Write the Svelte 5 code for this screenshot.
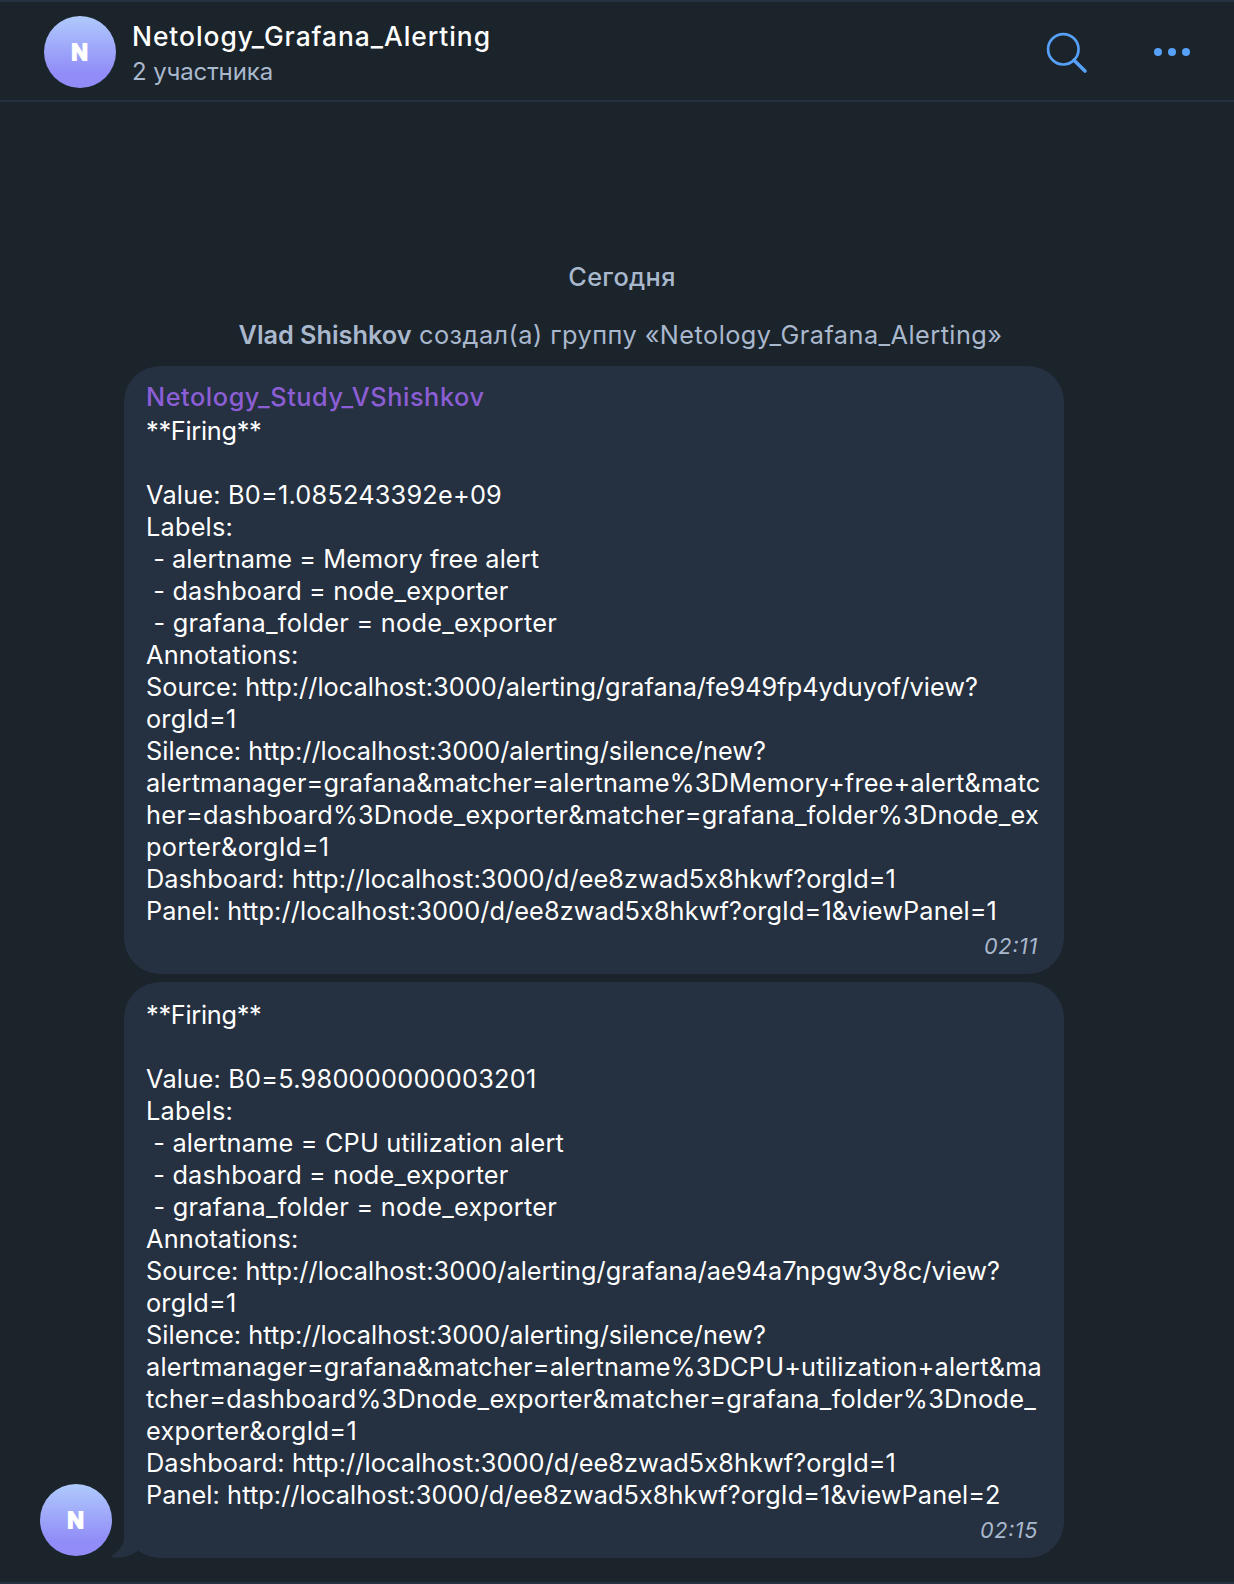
<script>
  const messages = [
    {
      author: { text: 'Netology_Study_VShishkov', width: 338.5 },
      time: { text: '02:11', width: 54 },
      lines: [
        ['**Firing**', 115.5],
        ['', 0],
        ['Value: B0=1.085243392e+09', 356],
        ['Labels:', 87],
        [' - alertname = Memory free alert', 393],
        [' - dashboard = node_exporter', 362.5],
        [' - grafana_folder = node_exporter', 411],
        ['Annotations:', 152.5],
        ['Source: http://localhost:3000/alerting/grafana/fe949fp4yduyof/view?', 832],
        ['orgId=1', 90.5],
        ['Silence: http://localhost:3000/alerting/silence/new?', 620],
        ['alertmanager=grafana&matcher=alertname%3DMemory+free+alert&matc', 894.5],
        ['her=dashboard%3Dnode_exporter&matcher=grafana_folder%3Dnode_ex', 893],
        ['porter&orgId=1', 183.5],
        ['Dashboard: http://localhost:3000/d/ee8zwad5x8hkwf?orgId=1', 750],
        ['Panel: http://localhost:3000/d/ee8zwad5x8hkwf?orgId=1&viewPanel=1', 851]
      ]
    },
    {
      author: null,
      time: { text: '02:15', width: 58 },
      lines: [
        ['**Firing**', 115.5],
        ['', 0],
        ['Value: B0=5.980000000003201', 390.5],
        ['Labels:', 87],
        [' - alertname = CPU utilization alert', 418],
        [' - dashboard = node_exporter', 362.5],
        [' - grafana_folder = node_exporter', 411],
        ['Annotations:', 152.5],
        ['Source: http://localhost:3000/alerting/grafana/ae94a7npgw3y8c/view?', 854],
        ['orgId=1', 90.5],
        ['Silence: http://localhost:3000/alerting/silence/new?', 620],
        ['alertmanager=grafana&matcher=alertname%3DCPU+utilization+alert&ma', 896],
        ['tcher=dashboard%3Dnode_exporter&matcher=grafana_folder%3Dnode_', 890],
        ['exporter&orgId=1', 211],
        ['Dashboard: http://localhost:3000/d/ee8zwad5x8hkwf?orgId=1', 750],
        ['Panel: http://localhost:3000/d/ee8zwad5x8hkwf?orgId=1&viewPanel=2', 854.5]
      ]
    }
  ];

  // Tracks a run of text so that it fills the given width.
  function track(node, width) {
    const count = node.textContent.length;
    if (!count) return;
    const natural = node.getBoundingClientRect().width;
    node.style.letterSpacing = `${(width - natural) / count}px`;
  }
</script>

<div class="chat">
  <header class="header">
    <div class="avatar"><span>N</span></div>
    <div class="heading">
      <h1><span class="run" use:track={359}>Netology_Grafana_Alerting</span></h1>
      <p><span class="run" use:track={141}>2 участника</span></p>
    </div>
    <svg class="search" width="44" height="44" viewBox="0 0 44 44" aria-label="Search">
      <circle cx="18.3" cy="18.3" r="15.2" />
      <path d="M29 29.2 L40 40" />
    </svg>
    <svg class="more" width="36" height="8" viewBox="0 0 36 8" aria-label="More">
      <circle cx="4" cy="4" r="4" />
      <circle cx="18" cy="4" r="4" />
      <circle cx="32" cy="4" r="4" />
    </svg>
  </header>

  <main class="history">
    <div class="date"><span class="run" use:track={107.5}>Сегодня</span></div>
    <div class="service">
      <b class="run" use:track={173}>Vlad Shishkov</b><span class="run" use:track={591}>&nbsp;создал(а) группу «Netology_Grafana_Alerting»</span>
    </div>

    <div class="group">
      <div class="avatar"><span>N</span></div>
      <div class="stack">
        {#each messages as message, i}
          <article class="bubble" class:first={message.author}>
            {#if message.author}
              <div class="author"><span class="run" use:track={message.author.width}>{message.author.text}</span></div>
            {/if}
            {#each message.lines as [text, width]}
              <div class="line"><span class="run" use:track={width}>{text}</span></div>
            {/each}
            <time><span class="run" use:track={message.time.width}>{message.time.text}</span></time>
            {#if i === messages.length - 1}
              <svg class="tail" width="60" height="40" viewBox="0 0 60 40" aria-hidden="true">
                <path d="M12 0 V23 C10 29 6 34 0.3 37.4 Q-0.5 39.6 1 39.6 C11 39.8 20 38 26.3 32.6 L40 20 V0 Z" />
              </svg>
            {/if}
          </article>
        {/each}
      </div>
    </div>
  </main>
</div>

<style>
  :global(body) {
    margin: 0;
    background: #1b232b;
  }
  .chat {
    box-sizing: border-box;
    height: 1584px;
    display: flex;
    flex-direction: column;
    border-top: 2px solid #253040;
    border-bottom: 2px solid #253040;
    background: #1b232b;
    color: #fff;
    font-family: Inter, 'Liberation Sans', sans-serif;
    font-size: 25.3px;
    line-height: 32px;
    overflow: hidden;
  }
  .run {
    display: inline-block;
    white-space: pre;
  }
  .header {
    box-sizing: border-box;
    flex: none;
    height: 100px;
    padding: 0 44px;
    display: flex;
    align-items: center;
    border-bottom: 2px solid #253040;
  }
  .header .avatar {
    margin-top: 2px;
  }
  .avatar {
    flex: none;
    width: 72px;
    height: 72px;
    border-radius: 50%;
    background: linear-gradient(#afcafc 0%, #918cf8 80%, #918cf8 100%);
    display: flex;
    align-items: center;
    justify-content: center;
    font-size: 22px;
    font-weight: 600;
  }
  .avatar span {
    -webkit-text-stroke: 1.8px #fff;
    stroke-linejoin: round;
    margin-right: 1px;
  }
  .heading {
    flex: 1;
    padding: 5px 0 0 16px;
  }
  h1,
  p {
    margin: 0;
    height: 35px;
    line-height: 35px;
  }
  h1 {
    font-size: 26.4px;
    font-weight: 500;
  }
  p {
    font-size: 24px;
    color: #a9b8cd;
  }
  .search {
    margin: 3px 65px 0 0;
    fill: none;
    stroke: #56a1f7;
    stroke-width: 2.7;
    stroke-linecap: round;
  }
  .search path {
    stroke-width: 3.6;
  }
  .more {
    fill: #56a1f7;
    margin: 2px 0 0;
  }
  .history {
    display: flex;
    flex-direction: column;
    padding-top: 159px;
  }
  .date,
  .service {
    display: flex;
    justify-content: center;
    color: #a9b8cd;
  }
  .date {
    padding-left: 10px;
    font-weight: 500;
  }
  .service {
    padding: 26px 0 15px 7px;
  }
  .service b {
    font-weight: 600;
  }
  .group {
    display: flex;
    align-items: flex-end;
    gap: 12px;
    padding-left: 40px;
  }
  .group > .avatar {
    margin-bottom: 2px;
  }
  .stack {
    width: 940px;
    display: flex;
    flex-direction: column;
    gap: 8px;
  }
  .bubble {
    position: relative;
    box-sizing: border-box;
    padding: 17px 22px 10px;
    border-radius: 36px;
    background: #253040;
    font-feature-settings: 'calt' 0;
  }
  .bubble.first {
    padding-top: 15px;
  }
  .author {
    height: 34px;
    color: #8c5ed5;
    font-weight: 500;
  }
  .line {
    height: 32px;
  }
  time {
    display: flex;
    justify-content: flex-end;
    height: 37px;
    line-height: 38px;
    padding-right: 4px;
    font-size: 21.6px;
    font-style: italic;
    color: #a9b8cd;
    font-feature-settings: 'calt' 1;
  }
  .tail {
    position: absolute;
    left: -12px;
    bottom: 0;
    fill: #253040;
  }
</style>
